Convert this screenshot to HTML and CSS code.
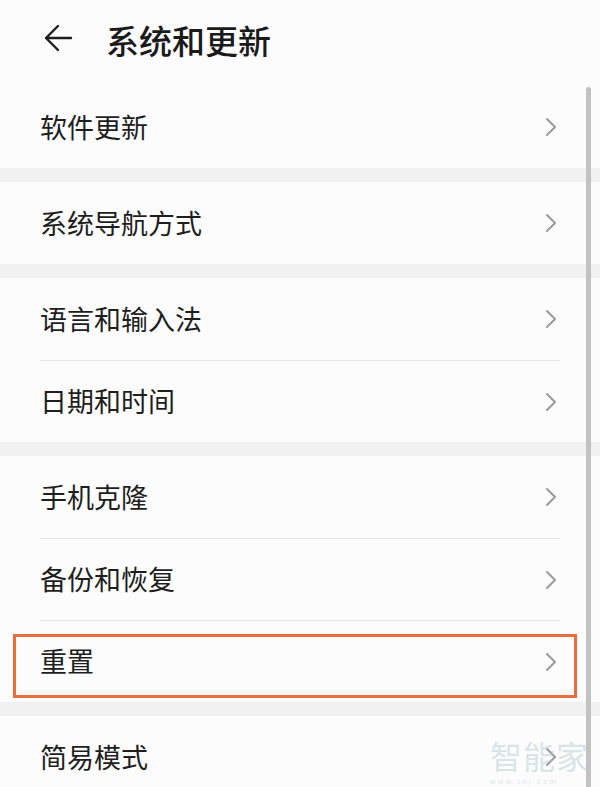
FILE: index.html
```html
<!DOCTYPE html>
<html lang="zh-CN">
<head>
    <meta charset="UTF-8">
    <meta name="viewport" content="width=device-width, initial-scale=1.0">
    <title>系统和更新</title>
    <link rel="stylesheet" href="styles.css">
</head>
<body>
    <div class="page">
        <header class="header">
            <svg class="back" width="30" height="30" viewBox="0 0 30 30">
                <path d="M28 15 H3 M15 3 L3 15 L15 27" fill="none" stroke="#1e1e1e" stroke-width="2.4" stroke-linecap="round" stroke-linejoin="round"/>
            </svg>
            <h1>系统和更新</h1>
        </header>

        <section class="group first">
            <div class="row"><span>软件更新</span><svg class="chev" width="12" height="20" viewBox="0 0 12 20"><path d="M2 2 L10 10 L2 18" fill="none" stroke="#9a9a9a" stroke-width="2" stroke-linecap="round" stroke-linejoin="round"/></svg></div>
        </section>

        <section class="group">
            <div class="row"><span>系统导航方式</span><svg class="chev" width="12" height="20" viewBox="0 0 12 20"><path d="M2 2 L10 10 L2 18" fill="none" stroke="#9a9a9a" stroke-width="2" stroke-linecap="round" stroke-linejoin="round"/></svg></div>
        </section>

        <section class="group">
            <div class="row"><span>语言和输入法</span><svg class="chev" width="12" height="20" viewBox="0 0 12 20"><path d="M2 2 L10 10 L2 18" fill="none" stroke="#9a9a9a" stroke-width="2" stroke-linecap="round" stroke-linejoin="round"/></svg></div>
            <div class="row"><span>日期和时间</span><svg class="chev" width="12" height="20" viewBox="0 0 12 20"><path d="M2 2 L10 10 L2 18" fill="none" stroke="#9a9a9a" stroke-width="2" stroke-linecap="round" stroke-linejoin="round"/></svg></div>
        </section>

        <section class="group">
            <div class="row"><span>手机克隆</span><svg class="chev" width="12" height="20" viewBox="0 0 12 20"><path d="M2 2 L10 10 L2 18" fill="none" stroke="#9a9a9a" stroke-width="2" stroke-linecap="round" stroke-linejoin="round"/></svg></div>
            <div class="row"><span>备份和恢复</span><svg class="chev" width="12" height="20" viewBox="0 0 12 20"><path d="M2 2 L10 10 L2 18" fill="none" stroke="#9a9a9a" stroke-width="2" stroke-linecap="round" stroke-linejoin="round"/></svg></div>
            <div class="row marked"><span>重置</span><svg class="chev" width="12" height="20" viewBox="0 0 12 20"><path d="M2 2 L10 10 L2 18" fill="none" stroke="#9a9a9a" stroke-width="2" stroke-linecap="round" stroke-linejoin="round"/></svg></div>
        </section>

        <section class="group">
            <div class="row"><span>简易模式</span><svg class="chev" width="12" height="20" viewBox="0 0 12 20"><path d="M2 2 L10 10 L2 18" fill="none" stroke="#9a9a9a" stroke-width="2" stroke-linecap="round" stroke-linejoin="round"/></svg></div>
        </section>

        <div class="scrollbar"></div>
        <div class="watermark">
            <span class="wm-name">智能家</span>
            <span class="wm-url">www.znj.com</span>
        </div>
    </div>
</body>
</html>
```

FILE: styles.css
```css
html, body {
    margin: 0;
    padding: 0;
    height: 100%;
    overflow: hidden;
}
body {
    font-family: "Noto Sans CJK SC", "Noto Sans", sans-serif;
    background-color: #fcfcfc;
    color: #1e1e1e;
}
.page {
    position: relative;
    width: 600px;
    height: 787px;
    overflow: hidden;
}
.header {
    display: flex;
    align-items: center;
    height: 80px;
    padding-left: 43px;
    margin-bottom: 6px;
}
.back {
    margin-top: -4px;
}
.header h1 {
    margin: 0 0 0 33px;
    font-size: 33px;
    font-weight: 500;
    line-height: 1;
    color: #1a1a1a;
}
.group {
    background-color: #fcfcfc;
    border-top: 14px solid #f1f1f1;
}
.group.first {
    border-top: none;
}
.row {
    position: relative;
    box-sizing: border-box;
    height: 82px;
    margin: 0 40px;
    display: flex;
    align-items: center;
    justify-content: space-between;
    font-size: 27px;
    color: #1e1e1e;
}
.row + .row {
    border-top: 1px solid #e6e6e6;
}
.row span {
    margin-top: -2px;
}
.chev {
    margin-right: 3px;
}
.marked::after {
    content: "";
    position: absolute;
    left: -27px;
    top: 13px;
    width: 564px;
    height: 64px;
    box-sizing: border-box;
    border: 3px solid #ea6d3d;
}
.scrollbar {
    position: absolute;
    right: 9px;
    top: 87px;
    bottom: 0;
    width: 5px;
    border-radius: 3px 3px 0 0;
    background-color: #c2c2c2;
}
.watermark {
    position: absolute;
    left: 490px;
    bottom: 0;
    display: flex;
    flex-direction: column;
    color: rgba(170, 200, 206, 0.45);
}
.wm-name {
    font-size: 32px;
    line-height: 46px;
    letter-spacing: 1px;
}
.wm-url {
    font-family: "DejaVu Sans", sans-serif;
    font-size: 7px;
    line-height: 9px;
    letter-spacing: 2px;
}
```
